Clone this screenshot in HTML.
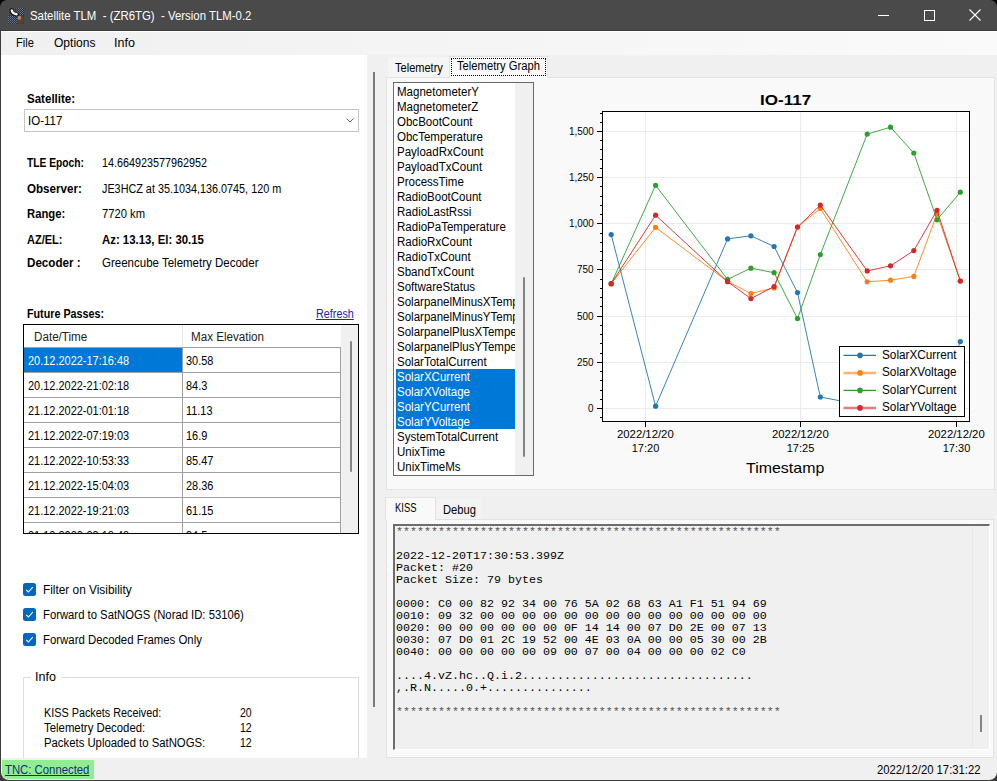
<!DOCTYPE html>
<html><head><meta charset="utf-8"><style>
html,body{margin:0;padding:0;width:997px;height:781px;overflow:hidden;background:#f0f0f0;}
body{position:relative;font-family:"Liberation Sans", sans-serif;}
.b{position:absolute;}
.t{position:absolute;white-space:pre;}
</style></head><body>
<div class="b" style="left:0px;top:0px;width:997px;height:781px;background:#f0f0f0;"></div><div class="b" style="left:0px;top:0px;width:997px;height:31px;background:#4a4a4a;"></div><div class="b" style="left:0px;top:30px;width:997px;height:1px;background:#3a3a3a;"></div><div class="b" style="left:0px;top:31px;width:997px;height:1px;background:#ffffff;"></div><div class="b" style="left:0;top:0;width:6px;height:6px;background:#000;"></div><div class="b" style="left:0;top:0;width:12px;height:12px;border-top-left-radius:7px;background:#4a4a4a;"></div><div class="b" style="left:991px;top:0;width:6px;height:6px;background:#000;"></div><div class="b" style="left:985px;top:0;width:12px;height:12px;border-top-right-radius:7px;background:#4a4a4a;"></div><div class="t" style="left:30.00px;top:8.04px;font-size:12px;line-height:16px;color:#ffffff;transform:scaleX(0.9504);transform-origin:0 0;">Satellite TLM  - (ZR6TG)  - Version TLM-0.2</div><svg class="b" style="left:8px;top:8px" width="16" height="16" viewBox="0 0 16 16">
<defs><pattern id="chk" width="2" height="2" patternUnits="userSpaceOnUse"><rect width="2" height="2" fill="#26303a"/><rect width="1" height="1" fill="#6e8194"/><rect x="1" y="1" width="1" height="1" fill="#526374"/></pattern>
<pattern id="chk2" width="2" height="2" patternUnits="userSpaceOnUse"><rect width="2" height="2" fill="#3a3c3e"/><rect width="1" height="1" fill="#5a5e62"/></pattern></defs>
<rect x="0" y="0" width="16" height="16" fill="url(#chk2)"/>
<rect x="9" y="0" width="7" height="7" fill="url(#chk)"/>
<rect x="0" y="8" width="9" height="8" fill="url(#chk)"/>
<path d="M3.6 2.2 Q3.8 6.2 9 6.6" stroke="#151515" stroke-width="4.2" fill="none" stroke-linecap="round"/>
<path d="M3.8 2.4 Q4.2 5.6 8.6 6.2" stroke="#f4f4f4" stroke-width="2.4" fill="none" stroke-linecap="round"/>
<ellipse cx="12.3" cy="11.6" rx="3.7" ry="4.4" fill="#5a3f2c"/>
<ellipse cx="11.4" cy="9.8" rx="1.9" ry="2.1" fill="#a88a78"/>
</svg><div class="b" style="left:878px;top:15px;width:11px;height:1px;background:#ffffff;"></div><div class="b" style="left:924px;top:10px;width:9px;height:9px;border:1px solid #ffffff;"></div><svg class="b" style="left:969px;top:9px" width="12" height="12" viewBox="0 0 12 12"><path d="M0.5 0.5 L11.5 11.5 M11.5 0.5 L0.5 11.5" stroke="#ffffff" stroke-width="1.1"/></svg><div class="b" style="left:0px;top:32px;width:997px;height:23px;background:linear-gradient(to right,#f0f0f0,#fafafa);"></div><div class="t" style="left:16.30px;top:34.84px;font-size:12px;line-height:16px;color:#000;transform:scaleX(0.9257);transform-origin:0 0;">File</div><div class="t" style="left:53.50px;top:34.84px;font-size:12px;line-height:16px;color:#000;transform:scaleX(1.0035);transform-origin:0 0;">Options</div><div class="t" style="left:114.10px;top:34.84px;font-size:12px;line-height:16px;color:#000;transform:scaleX(1.0442);transform-origin:0 0;">Info</div><div class="b" style="left:1px;top:55px;width:366px;height:703px;background:#ffffff;"></div><div class="t" style="left:26.90px;top:90.84px;font-size:12px;line-height:16px;color:#000;font-weight:bold;transform:scaleX(0.9617);transform-origin:0 0;">Satellite:</div><div class="b" style="left:24px;top:109px;width:335px;height:23px;border:1px solid #c4c4c4;background:#fff;box-sizing:border-box;"></div><div class="t" style="left:27.60px;top:112.94px;font-size:12px;line-height:16px;color:#000;transform:scaleX(0.9582);transform-origin:0 0;">IO-117</div><svg class="b" style="left:345px;top:117px" width="10" height="7" viewBox="0 0 10 7"><path d="M1.5 1.5 L5 5 L8.5 1.5" stroke="#606060" stroke-width="1" fill="none"/></svg><div class="t" style="left:26.50px;top:154.84px;font-size:12px;line-height:16px;color:#000;font-weight:bold;transform:scaleX(0.8551);transform-origin:0 0;">TLE Epoch:</div><div class="t" style="left:101.50px;top:154.84px;font-size:12px;line-height:16px;color:#000;transform:scaleX(0.9000);transform-origin:0 0;">14.664923577962952</div><div class="t" style="left:26.50px;top:180.84px;font-size:12px;line-height:16px;color:#000;font-weight:bold;transform:scaleX(0.9666);transform-origin:0 0;">Observer:</div><div class="t" style="left:101.50px;top:180.84px;font-size:12px;line-height:16px;color:#000;transform:scaleX(0.9014);transform-origin:0 0;">JE3HCZ at 35.1034,136.0745, 120 m</div><div class="t" style="left:26.50px;top:205.84px;font-size:12px;line-height:16px;color:#000;font-weight:bold;transform:scaleX(0.9393);transform-origin:0 0;">Range:</div><div class="t" style="left:101.50px;top:205.84px;font-size:12px;line-height:16px;color:#000;transform:scaleX(0.9343);transform-origin:0 0;">7720 km</div><div class="t" style="left:26.50px;top:231.84px;font-size:12px;line-height:16px;color:#000;font-weight:bold;transform:scaleX(0.9157);transform-origin:0 0;">AZ/EL:</div><div class="t" style="left:101.50px;top:231.84px;font-size:12px;line-height:16px;color:#000;font-weight:bold;transform:scaleX(0.9489);transform-origin:0 0;">Az: 13.13, El: 30.15</div><div class="t" style="left:26.50px;top:255.34px;font-size:12px;line-height:16px;color:#000;font-weight:bold;transform:scaleX(0.9684);transform-origin:0 0;">Decoder :</div><div class="t" style="left:101.50px;top:255.34px;font-size:12px;line-height:16px;color:#000;transform:scaleX(0.9589);transform-origin:0 0;">Greencube Telemetry Decoder</div><div class="t" style="left:26.90px;top:306.34px;font-size:12px;line-height:16px;color:#000;font-weight:bold;transform:scaleX(0.8950);transform-origin:0 0;">Future Passes:</div><div class="t" style="left:316.00px;top:306.34px;font-size:12px;line-height:16px;color:#2323a8;transform:scaleX(0.8996);transform-origin:0 0;text-decoration:underline;">Refresh</div><div class="b" style="left:23px;top:324px;width:336px;height:210px;border:1px solid #000;box-sizing:border-box;background:#fff;overflow:hidden;"></div><div class="b" style="left:24px;top:325px;width:316px;height:22px;background:#fff;"></div><div class="b" style="left:182px;top:325px;width:1px;height:22px;background:#e5e5e5;"></div><div class="t" style="left:33.50px;top:328.84px;font-size:12px;line-height:16px;color:#222;transform:scaleX(0.9708);transform-origin:0 0;">Date/Time</div><div class="t" style="left:190.70px;top:328.84px;font-size:12px;line-height:16px;color:#222;transform:scaleX(0.9686);transform-origin:0 0;">Max Elevation</div><div class="b" style="left:24px;top:347px;width:316px;height:1px;background:#a0a0a0;"></div><div class="b" style="left:24px;top:348px;width:158px;height:24px;background:#0078d7;"></div><div class="t" style="left:28.10px;top:352.84px;font-size:12px;line-height:16px;color:#fff;transform:scaleX(0.9127);transform-origin:0 0;">20.12.2022-17:16:48</div><div class="t" style="left:186.40px;top:352.84px;font-size:12px;line-height:16px;color:#000;transform:scaleX(0.9100);transform-origin:0 0;">30.58</div><div class="b" style="left:24px;top:372px;width:316px;height:1px;background:#a0a0a0;"></div><div class="t" style="left:28.10px;top:377.84px;font-size:12px;line-height:16px;color:#000;transform:scaleX(0.9127);transform-origin:0 0;">20.12.2022-21:02:18</div><div class="t" style="left:186.40px;top:377.84px;font-size:12px;line-height:16px;color:#000;transform:scaleX(0.9100);transform-origin:0 0;">84.3</div><div class="b" style="left:24px;top:397px;width:316px;height:1px;background:#a0a0a0;"></div><div class="t" style="left:28.10px;top:402.84px;font-size:12px;line-height:16px;color:#000;transform:scaleX(0.9127);transform-origin:0 0;">21.12.2022-01:01:18</div><div class="t" style="left:186.40px;top:402.84px;font-size:12px;line-height:16px;color:#000;transform:scaleX(0.9100);transform-origin:0 0;">11.13</div><div class="b" style="left:24px;top:422px;width:316px;height:1px;background:#a0a0a0;"></div><div class="t" style="left:28.10px;top:427.84px;font-size:12px;line-height:16px;color:#000;transform:scaleX(0.9127);transform-origin:0 0;">21.12.2022-07:19:03</div><div class="t" style="left:186.40px;top:427.84px;font-size:12px;line-height:16px;color:#000;transform:scaleX(0.9100);transform-origin:0 0;">16.9</div><div class="b" style="left:24px;top:447px;width:316px;height:1px;background:#a0a0a0;"></div><div class="t" style="left:28.10px;top:452.84px;font-size:12px;line-height:16px;color:#000;transform:scaleX(0.9127);transform-origin:0 0;">21.12.2022-10:53:33</div><div class="t" style="left:186.40px;top:452.84px;font-size:12px;line-height:16px;color:#000;transform:scaleX(0.9100);transform-origin:0 0;">85.47</div><div class="b" style="left:24px;top:472px;width:316px;height:1px;background:#a0a0a0;"></div><div class="t" style="left:28.10px;top:477.84px;font-size:12px;line-height:16px;color:#000;transform:scaleX(0.9127);transform-origin:0 0;">21.12.2022-15:04:03</div><div class="t" style="left:186.40px;top:477.84px;font-size:12px;line-height:16px;color:#000;transform:scaleX(0.9100);transform-origin:0 0;">28.36</div><div class="b" style="left:24px;top:497px;width:316px;height:1px;background:#a0a0a0;"></div><div class="t" style="left:28.10px;top:502.84px;font-size:12px;line-height:16px;color:#000;transform:scaleX(0.9127);transform-origin:0 0;">21.12.2022-19:21:03</div><div class="t" style="left:186.40px;top:502.84px;font-size:12px;line-height:16px;color:#000;transform:scaleX(0.9100);transform-origin:0 0;">61.15</div><div class="b" style="left:24px;top:522px;width:316px;height:1px;background:#a0a0a0;"></div><div class="b" style="left:182px;top:347px;width:1px;height:187px;background:#a0a0a0;"></div><div class="b" style="left:24px;top:523px;width:316px;height:10px;overflow:hidden;"><div class="t" style="left:4.10px;top:4.84px;font-size:12px;line-height:16px;color:#000;transform:scaleX(0.9127);transform-origin:0 0;">21.12.2022-23:18:48</div><div class="t" style="left:162.40px;top:4.84px;font-size:12px;line-height:16px;color:#000;transform:scaleX(0.9100);transform-origin:0 0;">34.5</div></div><div class="b" style="left:341px;top:325px;width:17px;height:208px;background:#f0f0f0;"></div><div class="b" style="left:340px;top:347px;width:1px;height:186px;background:#a0a0a0;"></div><div class="b" style="left:350px;top:341px;width:2px;height:131px;background:#858585;border-radius:1px;"></div><div class="b" style="left:23px;top:533px;width:336px;height:1px;background:#000;"></div><svg class="b" style="left:23px;top:583px" width="13" height="13" viewBox="0 0 13 13"><rect x="0" y="0" width="13" height="13" rx="2.5" fill="#0067c0"/><path d="M3.2 6.8 L5.4 9 L9.8 4.2" stroke="#fff" stroke-width="1.1" fill="none"/></svg><div class="t" style="left:42.70px;top:581.84px;font-size:12px;line-height:16px;color:#000;transform:scaleX(0.9866);transform-origin:0 0;">Filter on Visibility</div><svg class="b" style="left:23px;top:608px" width="13" height="13" viewBox="0 0 13 13"><rect x="0" y="0" width="13" height="13" rx="2.5" fill="#0067c0"/><path d="M3.2 6.8 L5.4 9 L9.8 4.2" stroke="#fff" stroke-width="1.1" fill="none"/></svg><div class="t" style="left:42.70px;top:606.84px;font-size:12px;line-height:16px;color:#000;transform:scaleX(0.9409);transform-origin:0 0;">Forward to SatNOGS (Norad ID: 53106)</div><svg class="b" style="left:23px;top:633px" width="13" height="13" viewBox="0 0 13 13"><rect x="0" y="0" width="13" height="13" rx="2.5" fill="#0067c0"/><path d="M3.2 6.8 L5.4 9 L9.8 4.2" stroke="#fff" stroke-width="1.1" fill="none"/></svg><div class="t" style="left:42.70px;top:631.84px;font-size:12px;line-height:16px;color:#000;transform:scaleX(0.9493);transform-origin:0 0;">Forward Decoded Frames Only</div><div class="b" style="left:23px;top:677px;width:336px;height:90px;border:1px solid #dcdcdc;box-sizing:border-box;"></div><div class="b" style="left:31px;top:670px;width:30px;height:14px;background:#fff;"></div><div class="t" style="left:35.30px;top:668.74px;font-size:12px;line-height:16px;color:#000;transform:scaleX(1.0442);transform-origin:0 0;">Info</div><div class="t" style="left:44.20px;top:704.84px;font-size:12px;line-height:16px;color:#000;transform:scaleX(0.9019);transform-origin:0 0;">KISS Packets Received:</div><div class="t" style="left:44.20px;top:719.84px;font-size:12px;line-height:16px;color:#000;transform:scaleX(0.9483);transform-origin:0 0;">Telemetry Decoded:</div><div class="t" style="left:44.20px;top:734.84px;font-size:12px;line-height:16px;color:#000;transform:scaleX(0.9440);transform-origin:0 0;">Packets Uploaded to SatNOGS:</div><div class="t" style="left:239.80px;top:704.84px;font-size:12px;line-height:16px;color:#000;transform:scaleX(0.8766);transform-origin:0 0;">20</div><div class="t" style="left:239.80px;top:719.84px;font-size:12px;line-height:16px;color:#000;transform:scaleX(0.8766);transform-origin:0 0;">12</div><div class="t" style="left:239.80px;top:734.84px;font-size:12px;line-height:16px;color:#000;transform:scaleX(0.8766);transform-origin:0 0;">12</div><div class="b" style="left:373px;top:72px;width:2px;height:635px;background:#7a7a7a;"></div><div class="b" style="left:386px;top:77px;width:609px;height:413px;background:#f9f9f9;border:1px solid #e3e3e3;box-sizing:border-box;"></div><div class="b" style="left:388px;top:57px;width:61px;height:20px;background:#f5f5f5;"></div><div class="t" style="left:395.30px;top:59.84px;font-size:12px;line-height:16px;color:#000;transform:scaleX(0.9209);transform-origin:0 0;">Telemetry</div><div class="b" style="left:449px;top:56px;width:99px;height:22px;background:#f9f9f9;border:1px solid #e3e3e3;border-bottom:none;box-sizing:border-box;"></div><div class="b" style="left:451px;top:58px;width:95px;height:18px;border:1px dotted #000;box-sizing:border-box;"></div><div class="t" style="left:457.30px;top:58.04px;font-size:12px;line-height:16px;color:#000;transform:scaleX(0.9357);transform-origin:0 0;">Telemetry Graph</div><div class="b" style="left:393px;top:82px;width:141px;height:394px;background:#fff;border:1px solid #6a6a6a;box-sizing:border-box;"></div><div class="b" style="left:394px;top:83px;width:121px;height:392px;overflow:hidden;"><div class="b" style="left:2px;top:286px;width:119px;height:15px;background:#0078d7;"></div><div class="b" style="left:2px;top:301px;width:119px;height:15px;background:#0078d7;"></div><div class="b" style="left:2px;top:316px;width:119px;height:15px;background:#0078d7;"></div><div class="b" style="left:2px;top:331px;width:119px;height:15px;background:#0078d7;"></div><div class="t" style="left:3.00px;top:1.24px;font-size:12px;line-height:16px;color:#000;transform:scaleX(0.9600);transform-origin:0 0;">MagnetometerY</div><div class="t" style="left:3.00px;top:16.24px;font-size:12px;line-height:16px;color:#000;transform:scaleX(0.9600);transform-origin:0 0;">MagnetometerZ</div><div class="t" style="left:3.00px;top:31.24px;font-size:12px;line-height:16px;color:#000;transform:scaleX(0.9600);transform-origin:0 0;">ObcBootCount</div><div class="t" style="left:3.00px;top:46.24px;font-size:12px;line-height:16px;color:#000;transform:scaleX(0.9600);transform-origin:0 0;">ObcTemperature</div><div class="t" style="left:3.00px;top:61.24px;font-size:12px;line-height:16px;color:#000;transform:scaleX(0.9600);transform-origin:0 0;">PayloadRxCount</div><div class="t" style="left:3.00px;top:76.24px;font-size:12px;line-height:16px;color:#000;transform:scaleX(0.9600);transform-origin:0 0;">PayloadTxCount</div><div class="t" style="left:3.00px;top:91.24px;font-size:12px;line-height:16px;color:#000;transform:scaleX(0.9600);transform-origin:0 0;">ProcessTime</div><div class="t" style="left:3.00px;top:106.24px;font-size:12px;line-height:16px;color:#000;transform:scaleX(0.9600);transform-origin:0 0;">RadioBootCount</div><div class="t" style="left:3.00px;top:121.24px;font-size:12px;line-height:16px;color:#000;transform:scaleX(0.9600);transform-origin:0 0;">RadioLastRssi</div><div class="t" style="left:3.00px;top:136.24px;font-size:12px;line-height:16px;color:#000;transform:scaleX(0.9600);transform-origin:0 0;">RadioPaTemperature</div><div class="t" style="left:3.00px;top:151.24px;font-size:12px;line-height:16px;color:#000;transform:scaleX(0.9600);transform-origin:0 0;">RadioRxCount</div><div class="t" style="left:3.00px;top:166.24px;font-size:12px;line-height:16px;color:#000;transform:scaleX(0.9600);transform-origin:0 0;">RadioTxCount</div><div class="t" style="left:3.00px;top:181.24px;font-size:12px;line-height:16px;color:#000;transform:scaleX(0.9600);transform-origin:0 0;">SbandTxCount</div><div class="t" style="left:3.00px;top:196.24px;font-size:12px;line-height:16px;color:#000;transform:scaleX(0.9600);transform-origin:0 0;">SoftwareStatus</div><div class="t" style="left:3.00px;top:211.24px;font-size:12px;line-height:16px;color:#000;transform:scaleX(0.9600);transform-origin:0 0;">SolarpanelMinusXTemperature</div><div class="t" style="left:3.00px;top:226.24px;font-size:12px;line-height:16px;color:#000;transform:scaleX(0.9600);transform-origin:0 0;">SolarpanelMinusYTemperature</div><div class="t" style="left:3.00px;top:241.24px;font-size:12px;line-height:16px;color:#000;transform:scaleX(0.9600);transform-origin:0 0;">SolarpanelPlusXTemperature</div><div class="t" style="left:3.00px;top:256.24px;font-size:12px;line-height:16px;color:#000;transform:scaleX(0.9600);transform-origin:0 0;">SolarpanelPlusYTemperature</div><div class="t" style="left:3.00px;top:271.24px;font-size:12px;line-height:16px;color:#000;transform:scaleX(0.9600);transform-origin:0 0;">SolarTotalCurrent</div><div class="t" style="left:3.00px;top:286.24px;font-size:12px;line-height:16px;color:#fff;transform:scaleX(0.9600);transform-origin:0 0;">SolarXCurrent</div><div class="t" style="left:3.00px;top:301.24px;font-size:12px;line-height:16px;color:#fff;transform:scaleX(0.9600);transform-origin:0 0;">SolarXVoltage</div><div class="t" style="left:3.00px;top:316.24px;font-size:12px;line-height:16px;color:#fff;transform:scaleX(0.9600);transform-origin:0 0;">SolarYCurrent</div><div class="t" style="left:3.00px;top:331.24px;font-size:12px;line-height:16px;color:#fff;transform:scaleX(0.9600);transform-origin:0 0;">SolarYVoltage</div><div class="t" style="left:3.00px;top:346.24px;font-size:12px;line-height:16px;color:#000;transform:scaleX(0.9600);transform-origin:0 0;">SystemTotalCurrent</div><div class="t" style="left:3.00px;top:361.24px;font-size:12px;line-height:16px;color:#000;transform:scaleX(0.9600);transform-origin:0 0;">UnixTime</div><div class="t" style="left:3.00px;top:376.24px;font-size:12px;line-height:16px;color:#000;transform:scaleX(0.9600);transform-origin:0 0;">UnixTimeMs</div></div><div class="b" style="left:515px;top:83px;width:18px;height:392px;background:#f0f0f0;"></div><div class="b" style="left:523px;top:277px;width:2px;height:180px;background:#858585;border-radius:1px;"></div><svg class="b" style="left:0;top:0" width="997" height="781" viewBox="0 0 997 781"><rect x="602.5" y="111.5" width="367" height="310" fill="#fff" stroke="none"/><line x1="603" x2="969" y1="408.5" y2="408.5" stroke="#ebebeb" stroke-width="1"/><line x1="603" x2="969" y1="362.5" y2="362.5" stroke="#ebebeb" stroke-width="1"/><line x1="603" x2="969" y1="316.5" y2="316.5" stroke="#ebebeb" stroke-width="1"/><line x1="603" x2="969" y1="269.5" y2="269.5" stroke="#ebebeb" stroke-width="1"/><line x1="603" x2="969" y1="223.5" y2="223.5" stroke="#ebebeb" stroke-width="1"/><line x1="603" x2="969" y1="177.5" y2="177.5" stroke="#ebebeb" stroke-width="1"/><line x1="603" x2="969" y1="131.5" y2="131.5" stroke="#ebebeb" stroke-width="1"/><line x1="645.5" x2="645.5" y1="112" y2="421" stroke="#ebebeb" stroke-width="1"/><line x1="800.5" x2="800.5" y1="112" y2="421" stroke="#ebebeb" stroke-width="1"/><line x1="956.5" x2="956.5" y1="112" y2="421" stroke="#ebebeb" stroke-width="1"/><rect x="602.5" y="111.5" width="367" height="310" fill="none" stroke="#000" stroke-width="1"/><line x1="600.0" x2="602.5" y1="417.5" y2="417.5" stroke="#000" stroke-width="1"/><line x1="597.0" x2="602.5" y1="408.5" y2="408.5" stroke="#000" stroke-width="1"/><line x1="600.0" x2="602.5" y1="399.5" y2="399.5" stroke="#000" stroke-width="1"/><line x1="600.0" x2="602.5" y1="390.5" y2="390.5" stroke="#000" stroke-width="1"/><line x1="600.0" x2="602.5" y1="380.5" y2="380.5" stroke="#000" stroke-width="1"/><line x1="600.0" x2="602.5" y1="371.5" y2="371.5" stroke="#000" stroke-width="1"/><line x1="597.0" x2="602.5" y1="362.5" y2="362.5" stroke="#000" stroke-width="1"/><line x1="600.0" x2="602.5" y1="353.5" y2="353.5" stroke="#000" stroke-width="1"/><line x1="600.0" x2="602.5" y1="343.5" y2="343.5" stroke="#000" stroke-width="1"/><line x1="600.0" x2="602.5" y1="334.5" y2="334.5" stroke="#000" stroke-width="1"/><line x1="600.0" x2="602.5" y1="325.5" y2="325.5" stroke="#000" stroke-width="1"/><line x1="597.0" x2="602.5" y1="316.5" y2="316.5" stroke="#000" stroke-width="1"/><line x1="600.0" x2="602.5" y1="306.5" y2="306.5" stroke="#000" stroke-width="1"/><line x1="600.0" x2="602.5" y1="297.5" y2="297.5" stroke="#000" stroke-width="1"/><line x1="600.0" x2="602.5" y1="288.5" y2="288.5" stroke="#000" stroke-width="1"/><line x1="600.0" x2="602.5" y1="279.5" y2="279.5" stroke="#000" stroke-width="1"/><line x1="597.0" x2="602.5" y1="269.5" y2="269.5" stroke="#000" stroke-width="1"/><line x1="600.0" x2="602.5" y1="260.5" y2="260.5" stroke="#000" stroke-width="1"/><line x1="600.0" x2="602.5" y1="251.5" y2="251.5" stroke="#000" stroke-width="1"/><line x1="600.0" x2="602.5" y1="242.5" y2="242.5" stroke="#000" stroke-width="1"/><line x1="600.0" x2="602.5" y1="233.5" y2="233.5" stroke="#000" stroke-width="1"/><line x1="597.0" x2="602.5" y1="223.5" y2="223.5" stroke="#000" stroke-width="1"/><line x1="600.0" x2="602.5" y1="214.5" y2="214.5" stroke="#000" stroke-width="1"/><line x1="600.0" x2="602.5" y1="205.5" y2="205.5" stroke="#000" stroke-width="1"/><line x1="600.0" x2="602.5" y1="196.5" y2="196.5" stroke="#000" stroke-width="1"/><line x1="600.0" x2="602.5" y1="186.5" y2="186.5" stroke="#000" stroke-width="1"/><line x1="597.0" x2="602.5" y1="177.5" y2="177.5" stroke="#000" stroke-width="1"/><line x1="600.0" x2="602.5" y1="168.5" y2="168.5" stroke="#000" stroke-width="1"/><line x1="600.0" x2="602.5" y1="159.5" y2="159.5" stroke="#000" stroke-width="1"/><line x1="600.0" x2="602.5" y1="149.5" y2="149.5" stroke="#000" stroke-width="1"/><line x1="600.0" x2="602.5" y1="140.5" y2="140.5" stroke="#000" stroke-width="1"/><line x1="597.0" x2="602.5" y1="131.5" y2="131.5" stroke="#000" stroke-width="1"/><line x1="600.0" x2="602.5" y1="122.5" y2="122.5" stroke="#000" stroke-width="1"/><line x1="600.0" x2="602.5" y1="113.5" y2="113.5" stroke="#000" stroke-width="1"/><line x1="645.5" x2="645.5" y1="421.5" y2="427" stroke="#000" stroke-width="1"/><line x1="800.5" x2="800.5" y1="421.5" y2="427" stroke="#000" stroke-width="1"/><line x1="956.5" x2="956.5" y1="421.5" y2="427" stroke="#000" stroke-width="1"/><clipPath id="pc"><rect x="603" y="112" width="366" height="309"/></clipPath><g clip-path="url(#pc)"><polyline points="611.2,234.6 655.6,406.2 727.6,238.9 750.9,235.8 774.1,246.5 797.5,292.6 820.3,397.0 867.2,406.0 890.5,405.0 913.8,404.0 937.0,403.0 960.3,341.6" fill="none" stroke="#1f77b4" stroke-width="1" opacity="0.9"/><circle cx="611.2" cy="234.6" r="2.6" fill="#1f77b4"/><circle cx="655.6" cy="406.2" r="2.6" fill="#1f77b4"/><circle cx="727.6" cy="238.9" r="2.6" fill="#1f77b4"/><circle cx="750.9" cy="235.8" r="2.6" fill="#1f77b4"/><circle cx="774.1" cy="246.5" r="2.6" fill="#1f77b4"/><circle cx="797.5" cy="292.6" r="2.6" fill="#1f77b4"/><circle cx="820.3" cy="397.0" r="2.6" fill="#1f77b4"/><circle cx="867.2" cy="406.0" r="2.6" fill="#1f77b4"/><circle cx="890.5" cy="405.0" r="2.6" fill="#1f77b4"/><circle cx="913.8" cy="404.0" r="2.6" fill="#1f77b4"/><circle cx="937.0" cy="403.0" r="2.6" fill="#1f77b4"/><circle cx="960.3" cy="341.6" r="2.6" fill="#1f77b4"/><polyline points="611.2,283.7 655.6,227.4 727.6,281.5 750.9,293.5 774.1,287.9 797.5,227.0 820.3,208.5 867.2,281.8 890.5,280.2 913.8,276.4 937.0,214.2 960.3,281.0" fill="none" stroke="#ff7f0e" stroke-width="1" opacity="0.9"/><circle cx="611.2" cy="283.7" r="2.6" fill="#ff7f0e"/><circle cx="655.6" cy="227.4" r="2.6" fill="#ff7f0e"/><circle cx="727.6" cy="281.5" r="2.6" fill="#ff7f0e"/><circle cx="750.9" cy="293.5" r="2.6" fill="#ff7f0e"/><circle cx="774.1" cy="287.9" r="2.6" fill="#ff7f0e"/><circle cx="797.5" cy="227.0" r="2.6" fill="#ff7f0e"/><circle cx="820.3" cy="208.5" r="2.6" fill="#ff7f0e"/><circle cx="867.2" cy="281.8" r="2.6" fill="#ff7f0e"/><circle cx="890.5" cy="280.2" r="2.6" fill="#ff7f0e"/><circle cx="913.8" cy="276.4" r="2.6" fill="#ff7f0e"/><circle cx="937.0" cy="214.2" r="2.6" fill="#ff7f0e"/><circle cx="960.3" cy="281.0" r="2.6" fill="#ff7f0e"/><polyline points="611.2,283.7 655.6,185.3 727.6,279.4 750.9,268.2 774.1,272.7 797.5,318.6 820.3,254.6 867.2,134.1 890.5,127.2 913.8,153.0 937.0,219.8 960.3,192.2" fill="none" stroke="#2ca02c" stroke-width="1" opacity="0.9"/><circle cx="611.2" cy="283.7" r="2.6" fill="#2ca02c"/><circle cx="655.6" cy="185.3" r="2.6" fill="#2ca02c"/><circle cx="727.6" cy="279.4" r="2.6" fill="#2ca02c"/><circle cx="750.9" cy="268.2" r="2.6" fill="#2ca02c"/><circle cx="774.1" cy="272.7" r="2.6" fill="#2ca02c"/><circle cx="797.5" cy="318.6" r="2.6" fill="#2ca02c"/><circle cx="820.3" cy="254.6" r="2.6" fill="#2ca02c"/><circle cx="867.2" cy="134.1" r="2.6" fill="#2ca02c"/><circle cx="890.5" cy="127.2" r="2.6" fill="#2ca02c"/><circle cx="913.8" cy="153.0" r="2.6" fill="#2ca02c"/><circle cx="937.0" cy="219.8" r="2.6" fill="#2ca02c"/><circle cx="960.3" cy="192.2" r="2.6" fill="#2ca02c"/><polyline points="611.2,283.7 655.6,215.2 727.6,281.7 750.9,298.6 774.1,286.5 797.5,227.0 820.3,205.1 867.2,270.9 890.5,265.8 913.8,250.6 937.0,210.3 960.3,281.0" fill="none" stroke="#d62728" stroke-width="1" opacity="0.9"/><circle cx="611.2" cy="283.7" r="2.6" fill="#d62728"/><circle cx="655.6" cy="215.2" r="2.6" fill="#d62728"/><circle cx="727.6" cy="281.7" r="2.6" fill="#d62728"/><circle cx="750.9" cy="298.6" r="2.6" fill="#d62728"/><circle cx="774.1" cy="286.5" r="2.6" fill="#d62728"/><circle cx="797.5" cy="227.0" r="2.6" fill="#d62728"/><circle cx="820.3" cy="205.1" r="2.6" fill="#d62728"/><circle cx="867.2" cy="270.9" r="2.6" fill="#d62728"/><circle cx="890.5" cy="265.8" r="2.6" fill="#d62728"/><circle cx="913.8" cy="250.6" r="2.6" fill="#d62728"/><circle cx="937.0" cy="210.3" r="2.6" fill="#d62728"/><circle cx="960.3" cy="281.0" r="2.6" fill="#d62728"/></g><rect x="839.5" y="346.5" width="125" height="70" fill="#fff" stroke="#000" stroke-width="1"/><line x1="843.5" x2="876" y1="355.4" y2="355.4" stroke="#1f77b4" stroke-width="1.2" opacity="1"/><circle cx="860" cy="355.4" r="2.8" fill="#1f77b4"/><line x1="843.5" x2="876" y1="372.9" y2="372.9" stroke="#ff7f0e" stroke-width="2.5" opacity="0.6"/><circle cx="860" cy="372.9" r="2.8" fill="#ff7f0e"/><line x1="843.5" x2="876" y1="390.4" y2="390.4" stroke="#2ca02c" stroke-width="1.2" opacity="1"/><circle cx="860" cy="390.4" r="2.8" fill="#2ca02c"/><line x1="843.5" x2="876" y1="407.9" y2="407.9" stroke="#d62728" stroke-width="2.5" opacity="0.6"/><circle cx="860" cy="407.9" r="2.8" fill="#d62728"/></svg><div class="t" style="left:881.60px;top:346.84px;font-size:12px;line-height:16px;color:#000;transform:scaleX(0.9799);transform-origin:0 0;">SolarXCurrent</div><div class="t" style="left:881.60px;top:364.34px;font-size:12px;line-height:16px;color:#000;transform:scaleX(0.9800);transform-origin:0 0;">SolarXVoltage</div><div class="t" style="left:881.60px;top:381.84px;font-size:12px;line-height:16px;color:#000;transform:scaleX(0.9800);transform-origin:0 0;">SolarYCurrent</div><div class="t" style="left:881.60px;top:399.34px;font-size:12px;line-height:16px;color:#000;transform:scaleX(0.9800);transform-origin:0 0;">SolarYVoltage</div><div class="t" style="left:588.39px;top:401.49px;font-size:11px;line-height:15px;color:#000;transform:scaleX(0.9000);transform-origin:0 0;">0</div><div class="t" style="left:577.38px;top:355.49px;font-size:11px;line-height:15px;color:#000;transform:scaleX(0.9000);transform-origin:0 0;">250</div><div class="t" style="left:577.38px;top:309.49px;font-size:11px;line-height:15px;color:#000;transform:scaleX(0.9000);transform-origin:0 0;">500</div><div class="t" style="left:577.38px;top:262.49px;font-size:11px;line-height:15px;color:#000;transform:scaleX(0.9000);transform-origin:0 0;">750</div><div class="t" style="left:569.13px;top:216.49px;font-size:11px;line-height:15px;color:#000;transform:scaleX(0.9000);transform-origin:0 0;">1,000</div><div class="t" style="left:569.13px;top:170.49px;font-size:11px;line-height:15px;color:#000;transform:scaleX(0.9000);transform-origin:0 0;">1,250</div><div class="t" style="left:569.13px;top:124.49px;font-size:11px;line-height:15px;color:#000;transform:scaleX(0.9000);transform-origin:0 0;">1,500</div><div class="t" style="left:617.15px;top:426.59px;font-size:11px;line-height:15px;color:#000;transform:scaleX(1.0300);transform-origin:0 0;">2022/12/20</div><div class="t" style="left:631.74px;top:440.99px;font-size:11px;line-height:15px;color:#000;">17:20</div><div class="t" style="left:772.15px;top:426.59px;font-size:11px;line-height:15px;color:#000;transform:scaleX(1.0300);transform-origin:0 0;">2022/12/20</div><div class="t" style="left:786.74px;top:440.99px;font-size:11px;line-height:15px;color:#000;">17:25</div><div class="t" style="left:928.15px;top:426.59px;font-size:11px;line-height:15px;color:#000;transform:scaleX(1.0300);transform-origin:0 0;">2022/12/20</div><div class="t" style="left:942.74px;top:440.99px;font-size:11px;line-height:15px;color:#000;">17:30</div><div class="t" style="left:760.00px;top:89.90px;font-size:15px;line-height:20px;color:#000;font-weight:bold;transform:scaleX(1.1348);transform-origin:0 0;">IO-117</div><div class="t" style="left:746.00px;top:458.00px;font-size:15px;line-height:20px;color:#000;transform:scaleX(1.0635);transform-origin:0 0;">Timestamp</div><div class="b" style="left:386px;top:519px;width:608px;height:239px;background:#f9f9f9;border:1px solid #e3e3e3;box-sizing:border-box;"></div><div class="b" style="left:385px;top:497px;width:51px;height:23px;background:#f9f9f9;border:1px solid #e3e3e3;border-bottom:none;box-sizing:border-box;"></div><div class="t" style="left:394.50px;top:499.64px;font-size:12px;line-height:16px;color:#000;transform:scaleX(0.7862);transform-origin:0 0;">KISS</div><div class="b" style="left:437px;top:499px;width:44px;height:20px;background:#f3f3f3;"></div><div class="t" style="left:442.50px;top:502.04px;font-size:12px;line-height:16px;color:#000;transform:scaleX(0.9300);transform-origin:0 0;">Debug</div><div class="b" style="left:393px;top:524px;width:597px;height:226px;background:#f0f0f0;border-top:2px solid #6d6d6d;border-left:2px solid #6d6d6d;border-right:1px solid #fff;border-bottom:1px solid #fff;box-sizing:border-box;"></div><div class="b" style="left:972px;top:527px;width:16px;height:221px;background:#f0f0f0;border-left:1px solid #e8e8e8;"></div><div class="b" style="left:980px;top:715px;width:2px;height:17px;background:#858585;"></div><div class="t" style="left:396.00px;top:523.89px;font-size:11.67px;line-height:16px;color:#555;font-family:'Liberation Mono',monospace;">*******************************************************</div><div class="t" style="left:396.00px;top:547.89px;font-size:11.67px;line-height:16px;color:#000;font-family:'Liberation Mono',monospace;">2022-12-20T17:30:53.399Z</div><div class="t" style="left:396.00px;top:559.89px;font-size:11.67px;line-height:16px;color:#000;font-family:'Liberation Mono',monospace;">Packet: #20</div><div class="t" style="left:396.00px;top:571.89px;font-size:11.67px;line-height:16px;color:#000;font-family:'Liberation Mono',monospace;">Packet Size: 79 bytes</div><div class="t" style="left:396.00px;top:595.89px;font-size:11.67px;line-height:16px;color:#000;font-family:'Liberation Mono',monospace;">0000: C0 00 82 92 34 00 76 5A 02 68 63 A1 F1 51 94 69</div><div class="t" style="left:396.00px;top:607.89px;font-size:11.67px;line-height:16px;color:#000;font-family:'Liberation Mono',monospace;">0010: 09 32 00 00 00 00 00 00 00 00 00 00 00 00 00 00</div><div class="t" style="left:396.00px;top:619.89px;font-size:11.67px;line-height:16px;color:#000;font-family:'Liberation Mono',monospace;">0020: 00 00 00 00 00 00 0F 14 14 00 07 D0 2E 00 07 13</div><div class="t" style="left:396.00px;top:631.89px;font-size:11.67px;line-height:16px;color:#000;font-family:'Liberation Mono',monospace;">0030: 07 D0 01 2C 19 52 00 4E 03 0A 00 00 05 30 00 2B</div><div class="t" style="left:396.00px;top:643.89px;font-size:11.67px;line-height:16px;color:#000;font-family:'Liberation Mono',monospace;">0040: 00 00 00 00 00 09 00 07 00 04 00 00 00 02 C0</div><div class="t" style="left:396.00px;top:667.89px;font-size:11.67px;line-height:16px;color:#000;font-family:'Liberation Mono',monospace;">....4.vZ.hc..Q.i.2.................................</div><div class="t" style="left:396.00px;top:679.89px;font-size:11.67px;line-height:16px;color:#000;font-family:'Liberation Mono',monospace;">,.R.N.....0.+...............</div><div class="t" style="left:396.00px;top:703.89px;font-size:11.67px;line-height:16px;color:#555;font-family:'Liberation Mono',monospace;">*******************************************************</div><div class="b" style="left:0px;top:758px;width:997px;height:22px;background:#f0f0f0;"></div><div class="b" style="left:0;top:772px;width:9px;height:9px;background:#3c3c3c;"></div><div class="b" style="left:1px;top:764px;width:16px;height:16px;border-bottom-left-radius:8px;background:#f0f0f0;"></div><div class="b" style="left:988px;top:772px;width:9px;height:9px;background:#3c3c3c;"></div><div class="b" style="left:980px;top:764px;width:17px;height:16px;border-bottom-right-radius:8px;background:#f0f0f0;"></div><div class="b" style="left:2px;top:760px;width:92px;height:19px;background:#90ee90;border-bottom-left-radius:6px;"></div><div class="t" style="left:4.60px;top:761.54px;font-size:12px;line-height:16px;color:#102c80;transform:scaleX(0.9444);transform-origin:0 0;text-decoration:underline;">TNC: Connected</div><div class="t" style="left:876.80px;top:761.54px;font-size:12px;line-height:16px;color:#000;transform:scaleX(0.9400);transform-origin:0 0;">2022/12/20 17:31:22</div><div class="b" style="left:0px;top:30px;width:1px;height:743px;background:#3c3c3c;"></div><div class="b" style="left:8px;top:780px;width:981px;height:1px;background:#3c3c3c;"></div>
</body></html>
